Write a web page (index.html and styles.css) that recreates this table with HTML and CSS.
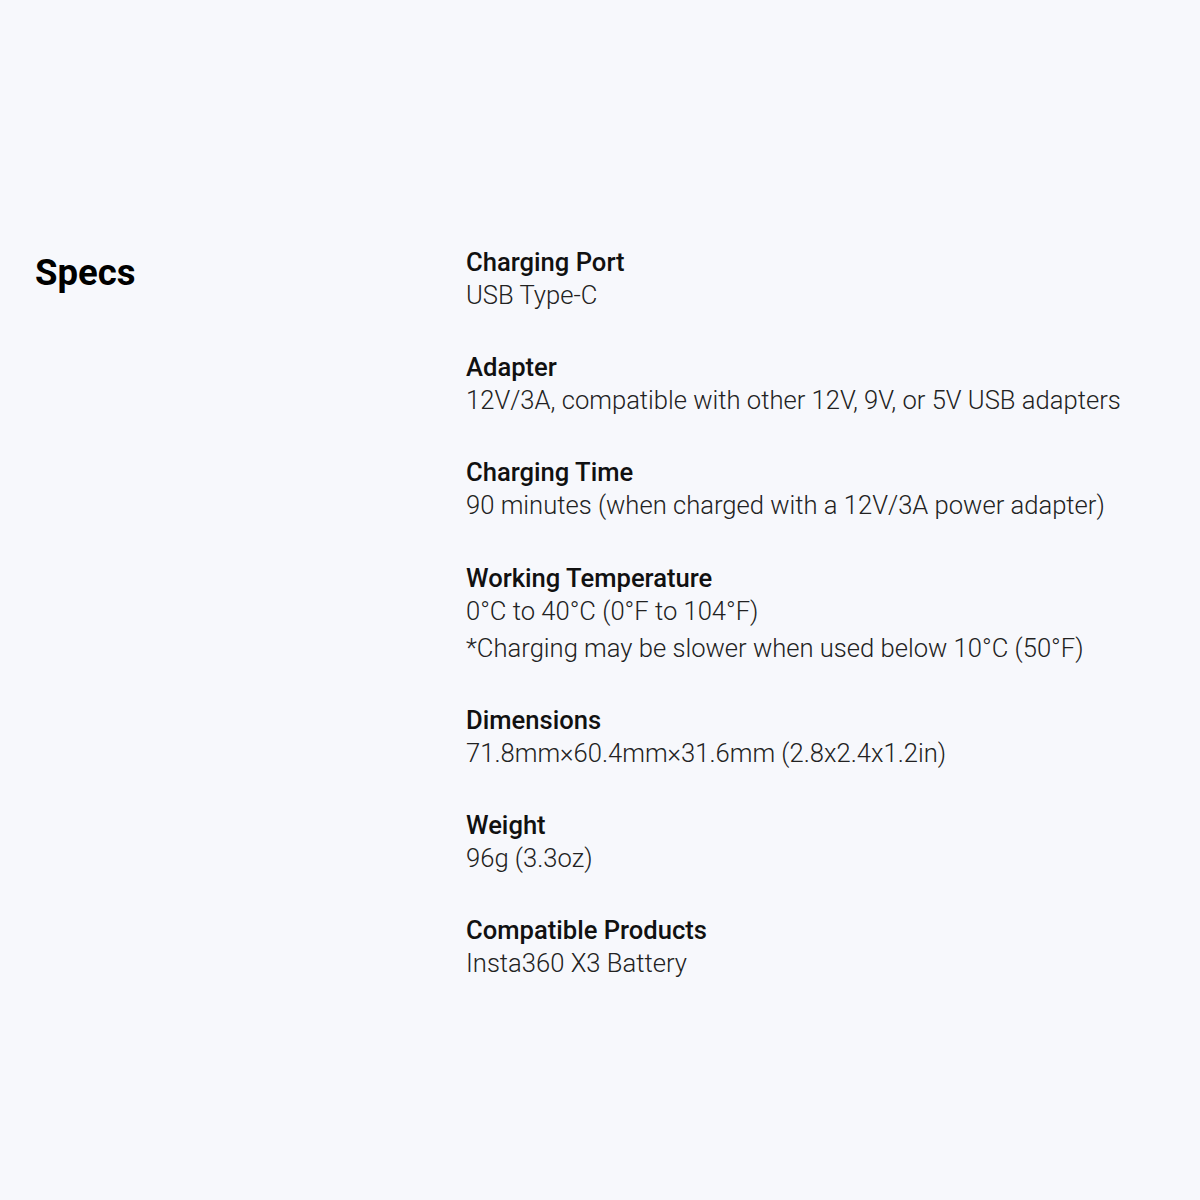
FILE: index.html
```html
<!DOCTYPE html>
<html>
<head>
<meta charset="utf-8">
<link rel="stylesheet" href="styles.css">
</head>
<body>
<main class="specs">
  <h2 class="specs-title">Specs</h2>
  <div class="specs-list">
    <div class="spec">
      <div class="spec-label">Charging Port</div>
      <div class="spec-value">USB Type-C</div>
    </div>
    <div class="spec">
      <div class="spec-label">Adapter</div>
      <div class="spec-value">12V/3A, compatible with other 12V, 9V, or 5V USB adapters</div>
    </div>
    <div class="spec">
      <div class="spec-label">Charging Time</div>
      <div class="spec-value">90 minutes (when charged with a 12V/3A power adapter)</div>
    </div>
    <div class="spec">
      <div class="spec-label">Working Temperature</div>
      <div class="spec-value">0°C to 40°C (0°F to 104°F)</div>
      <div class="spec-value">*Charging may be slower when used below 10°C (50°F)</div>
    </div>
    <div class="spec">
      <div class="spec-label">Dimensions</div>
      <div class="spec-value">71.8mm×60.4mm×31.6mm (2.8x2.4x1.2in)</div>
    </div>
    <div class="spec">
      <div class="spec-label">Weight</div>
      <div class="spec-value">96g (3.3oz)</div>
    </div>
    <div class="spec">
      <div class="spec-label">Compatible Products</div>
      <div class="spec-value">Insta360 X3 Battery</div>
    </div>
  </div>
</main>
</body>
</html>
```

FILE: styles.css
```css
html, body {
  margin: 0;
  padding: 0;
  background: #f7f8fc;
}
body {
  font-family: Roboto, "Liberation Sans", sans-serif;
  color: #111;
  width: 1200px;
  height: 1200px;
}
.specs {
  display: flex;
  padding: 248px 0 0 35px;
}
.specs-title {
  margin: 0;
  width: 431px;
  font-size: 36.5px;
  font-weight: 700;
  line-height: 50px;
  color: #000;
}
.specs-list {
  display: flex;
  flex-direction: column;
  gap: 39.2px;
}
.spec-label {
  font-size: 25.6px;
  font-weight: 500;
  line-height: 29px;
  color: #111;
}
.spec-value {
  font-size: 25.6px;
  font-weight: 300;
  line-height: 37px;
  color: #222;
}
```
